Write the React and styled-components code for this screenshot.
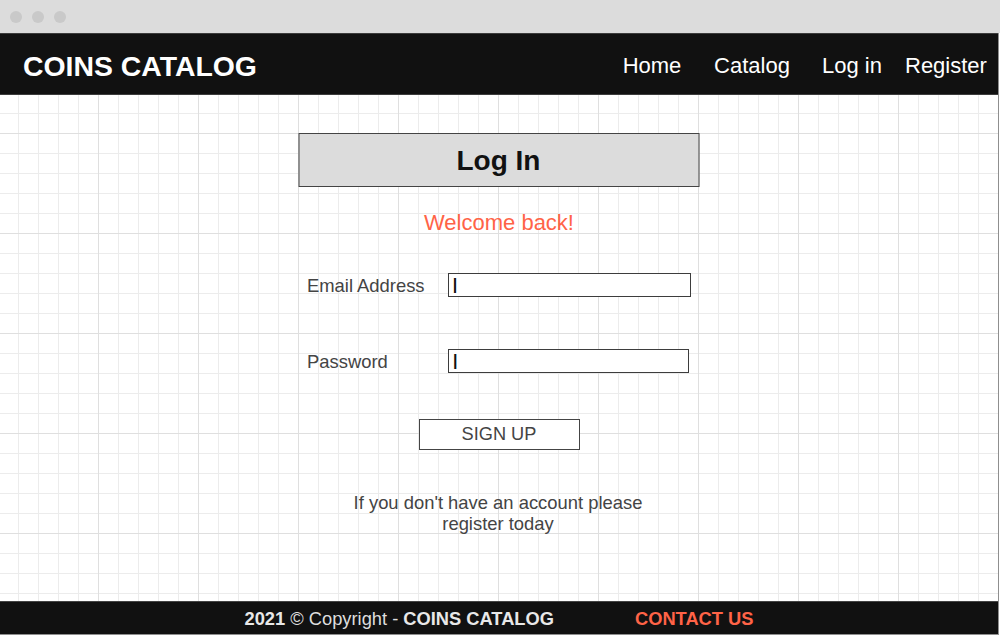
import React from "react";
import styled, { createGlobalStyle } from "styled-components";

const GlobalStyle = createGlobalStyle`
  body {
    margin: 0;
    background: #ffffff;
    font-family: "Liberation Sans", Arial, sans-serif;
  }
`;

const Window = styled.div`
  display: flex;
  flex-direction: column;
  width: 1000px;
  height: 635px;
`;

const TitleBar = styled.div`
  display: flex;
  align-items: center;
  gap: 10px;
  height: 33px;
  padding-left: 10px;
  background: #dcdcdc;
  box-sizing: border-box;
`;

const Dot = styled.span`
  width: 12px;
  height: 12px;
  border-radius: 50%;
  background: #c9c9c9;
`;

const Page = styled.div`
  flex: 1;
  display: flex;
  flex-direction: column;
  width: 999px;
  border-right: 1px solid #8f8f8f;
  border-bottom: 1px solid #8f8f8f;
  box-sizing: border-box;
`;

const Header = styled.header`
  display: flex;
  justify-content: space-between;
  align-items: center;
  height: 62px;
  padding-left: 23px;
  background: #111111;
  border-top: 1px solid #3c3c3c;
  border-bottom: 1px solid #3c3c3c;
  box-sizing: border-box;
`;

const Brand = styled.div`
  color: #ffffff;
  font-size: 28.4px;
  font-weight: 700;
  padding-top: 4px;
`;

const Nav = styled.nav`
  display: flex;
  align-items: center;
  padding-top: 4px;
`;

const NavLink = styled.a`
  width: ${(p) => (p.$last ? "96px" : "100px")};
  padding-left: ${(p) => (p.$last ? "3px" : "0")};
  box-sizing: border-box;
  text-align: ${(p) => (p.$last ? "left" : "center")};
  color: #ffffff;
  font-size: 22px;
  text-decoration: none;
  cursor: pointer;
`;

const Main = styled.main`
  flex: 1;
  display: flex;
  flex-direction: column;
  align-items: center;
  padding-top: 38px;
  box-sizing: border-box;
  background-color: #ffffff;
  background-image:
    linear-gradient(to right, #dfdfdf 1px, transparent 1px),
    linear-gradient(to bottom, #dfdfdf 1px, transparent 1px),
    linear-gradient(to right, #ececec 1px, transparent 1px),
    linear-gradient(to bottom, #ececec 1px, transparent 1px);
  background-size: 100px 100px, 100px 100px, 20px 20px, 20px 20px;
  background-position: 98px 38px, 98px 38px, 18px 18px, 18px 18px;
`;

const TitleBox = styled.h1`
  display: flex;
  justify-content: center;
  align-items: center;
  width: 401px;
  height: 54px;
  margin: 0;
  padding-top: 2px;
  background: #dcdcdc;
  border: 1px solid #444444;
  box-sizing: border-box;
  color: #111111;
  font-size: 28px;
  font-weight: 700;
  transform: translateX(-0.5px);
`;

const Welcome = styled.p`
  margin: 25px 0 0;
  color: #ff6347;
  font-size: 22px;
  line-height: 1;
`;

const Form = styled.form`
  display: flex;
  flex-direction: column;
  align-items: center;
  width: 384px;
  margin-top: 39px;
`;

const Row = styled.div`
  display: flex;
  align-items: center;
  align-self: stretch;
  margin-bottom: ${(p) => (p.$gap ? p.$gap : "0")};
`;

const Label = styled.label`
  width: 141px;
  padding-top: 2px;
  color: #444444;
  font-size: 18.4px;
  line-height: 1;
`;

const Input = styled.input`
  width: ${(p) => p.$width};
  height: 24px;
  padding: 0 4px;
  border: 1px solid #3d3d3d;
  border-radius: 0;
  box-sizing: border-box;
  background: #ffffff;
  color: #111111;
  font-family: "Liberation Sans", Arial, sans-serif;
  font-size: 16px;
  font-weight: 700;
  outline: none;

  &::placeholder {
    color: #111111;
    opacity: 1;
  }
`;

const Button = styled.button`
  width: 161px;
  height: 31px;
  margin-top: 46px;
  padding: 0;
  background: #ffffff;
  border: 1px solid #444444;
  border-radius: 0;
  color: #444444;
  font-family: "Liberation Sans", Arial, sans-serif;
  font-size: 18.2px;
  cursor: pointer;
`;

const Note = styled.p`
  width: 300px;
  margin: 42px 0 0;
  color: #444444;
  font-size: 18.4px;
  line-height: 21px;
  text-align: center;
  transform: translateX(-1px);
`;

const Footer = styled.footer`
  display: flex;
  justify-content: center;
  align-items: center;
  gap: 81px;
  height: 33px;
  padding-top: 1px;
  background: #111111;
  border-top: 1px solid #444444;
  box-sizing: border-box;
  font-size: 18.3px;
`;

const Copy = styled.span`
  color: #dedede;

  b {
    color: #e8e8e8;
  }
`;

const Contact = styled.a`
  color: #ff6347;
  font-weight: 700;
  text-decoration: none;
  cursor: pointer;
`;

export default function App() {
  return (
    <Window>
      <GlobalStyle />
      <TitleBar>
        <Dot />
        <Dot />
        <Dot />
      </TitleBar>
      <Page>
        <Header>
          <Brand>COINS CATALOG</Brand>
          <Nav>
            <NavLink>Home</NavLink>
            <NavLink>Catalog</NavLink>
            <NavLink>Log in</NavLink>
            <NavLink $last>Register</NavLink>
          </Nav>
        </Header>
        <Main>
          <TitleBox>Log In</TitleBox>
          <Welcome>Welcome back!</Welcome>
          <Form onSubmit={(e) => e.preventDefault()}>
            <Row $gap="52px">
              <Label htmlFor="email">Email Address</Label>
              <Input id="email" type="email" placeholder="|" $width="244px" />
            </Row>
            <Row>
              <Label htmlFor="password">Password</Label>
              <Input id="password" type="password" placeholder="|" $width="241px" />
            </Row>
            <Button type="submit">SIGN UP</Button>
          </Form>
          <Note>If you don't have an account please register today</Note>
        </Main>
        <Footer>
          <Copy>
            <b>2021</b> © Copyright - <b>COINS CATALOG</b>
          </Copy>
          <Contact>CONTACT US</Contact>
        </Footer>
      </Page>
    </Window>
  );
}
